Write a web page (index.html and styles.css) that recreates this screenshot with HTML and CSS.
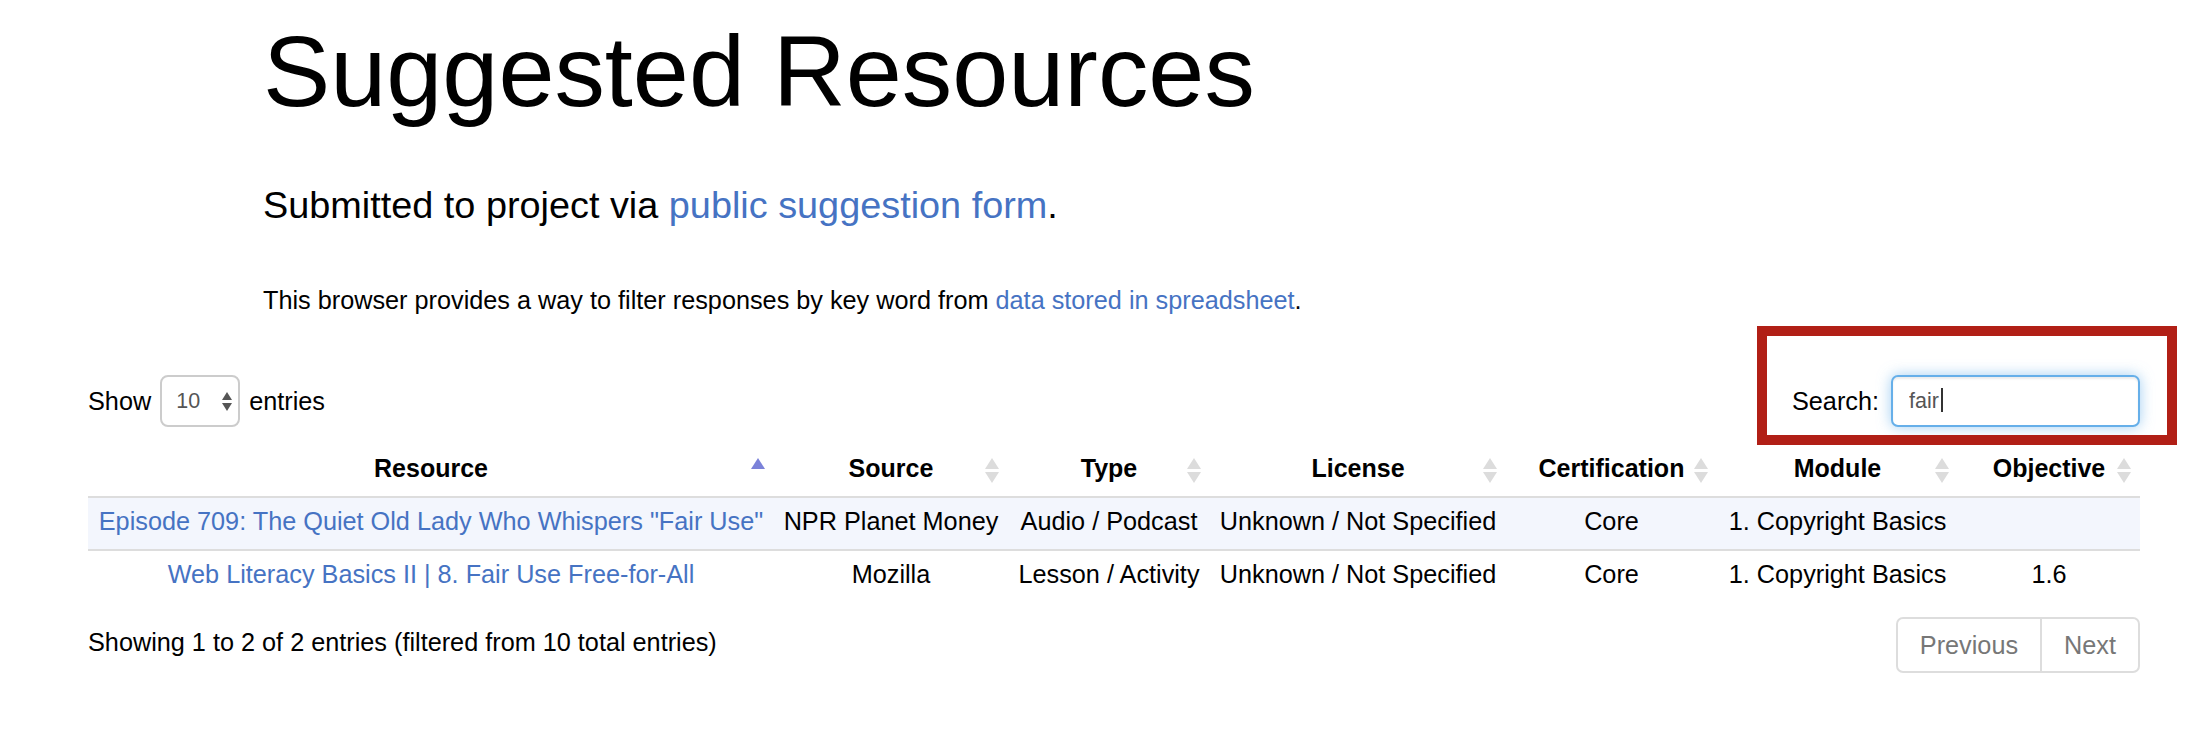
FILE: index.html
```html
<!DOCTYPE html>
<html lang="en">
<head>
    <meta charset="UTF-8">
    <meta name="viewport" content="width=device-width, initial-scale=1.0">
    <title>Suggested Resources</title>
    <link rel="stylesheet" href="styles.css">
</head>
<body>

<div class="intro">
    <h1>Suggested Resources</h1>
    <p class="lead">Submitted to project via <a href="#">public suggestion form</a>.</p>
    <p class="intro-text">This browser provides a way to filter responses by key word from <a href="#">data stored in spreadsheet</a>.</p>
</div>

<div class="dataTables_wrapper">
    <div class="toolbar">
        <div class="dataTables_length">
            <label>
                <span>Show</span>
                <span class="select-wrap">
                    <select name="resources_length">
                        <option value="10">10</option>
                        <option value="25">25</option>
                        <option value="50">50</option>
                        <option value="100">100</option>
                    </select>
                </span>
                <span>entries</span>
            </label>
        </div>
        <div class="dataTables_filter">
            <label>
                <span>Search:</span>
                <span class="search-field">
                    <input type="search" value="fair">
                    <span class="text-cursor"></span>
                </span>
            </label>
            <div class="highlight"></div>
        </div>
    </div>

    <table class="resources">
        <colgroup>
            <col class="col-resource">
            <col class="col-source">
            <col class="col-type">
            <col class="col-license">
            <col class="col-cert">
            <col class="col-module">
            <col class="col-objective">
        </colgroup>
        <thead>
            <tr>
                <th class="sorting_asc">Resource</th>
                <th class="sorting">Source</th>
                <th class="sorting">Type</th>
                <th class="sorting">License</th>
                <th class="sorting">Certification</th>
                <th class="sorting">Module</th>
                <th class="sorting">Objective</th>
            </tr>
        </thead>
        <tbody>
            <tr class="odd">
                <td><a href="#">Episode 709: The Quiet Old Lady Who Whispers "Fair Use"</a></td>
                <td>NPR Planet Money</td>
                <td>Audio / Podcast</td>
                <td>Unknown / Not Specified</td>
                <td>Core</td>
                <td>1. Copyright Basics</td>
                <td></td>
            </tr>
            <tr class="even">
                <td><a href="#">Web Literacy Basics II | 8. Fair Use Free-for-All</a></td>
                <td>Mozilla</td>
                <td>Lesson / Activity</td>
                <td>Unknown / Not Specified</td>
                <td>Core</td>
                <td>1. Copyright Basics</td>
                <td>1.6</td>
            </tr>
        </tbody>
    </table>

    <div class="table-footer">
        <div class="dataTables_info">Showing 1 to 2 of 2 entries (filtered from 10 total entries)</div>
        <ul class="pagination">
            <li class="disabled"><a href="#">Previous</a></li>
            <li class="disabled"><a href="#">Next</a></li>
        </ul>
    </div>
</div>

</body>
</html>
```

FILE: styles.css
```css
body {
    margin: 0;
    font-family: "Liberation Sans", Arial, sans-serif;
    font-size: 25.25px;
    line-height: 36px;
    color: #000;
    background: #fff;
}
a {
    color: #4673c3;
    text-decoration: none;
}

/* intro */
.intro {
    padding: 16px 0 0 263px;
}
h1 {
    margin: 0;
    font-size: 100.8px;
    font-weight: normal;
    line-height: 110px;
}
.lead {
    margin: 53px 0 0;
    font-size: 37.85px;
    line-height: 52px;
}
.intro-text {
    margin: 51px 0 0;
}

/* datatable */
.dataTables_wrapper {
    margin: 57px 72px 0 88px;
}
.toolbar {
    display: flex;
    justify-content: space-between;
    align-items: center;
    height: 52px;
}
.dataTables_length label,
.dataTables_filter label {
    display: flex;
    align-items: center;
}
.dataTables_length label {
    gap: 9px;
}
.dataTables_filter label {
    gap: 12px;
}
.select-wrap {
    position: relative;
    display: block;
}
.select-wrap select {
    -webkit-appearance: none;
    appearance: none;
    display: block;
    width: 80px;
    height: 52px;
    box-sizing: border-box;
    padding: 0 0 0 14px;
    border: 2px solid #ccc;
    border-radius: 8px;
    background: #fff;
    font-family: "Liberation Sans", Arial, sans-serif;
    font-size: 21.5px;
    color: #555;
}
.select-wrap::before,
.select-wrap::after {
    content: "";
    position: absolute;
    left: 62px;
    border-left: 5px solid transparent;
    border-right: 5px solid transparent;
}
.select-wrap::before {
    top: 17px;
    border-bottom: 8px solid #555;
}
.select-wrap::after {
    top: 28px;
    border-top: 8px solid #555;
}

.dataTables_filter {
    position: relative;
}
.search-field {
    position: relative;
    display: block;
}
.search-field input {
    display: block;
    width: 249px;
    height: 52px;
    box-sizing: border-box;
    padding: 0 16px;
    border: 2px solid #66afe9;
    border-radius: 7px;
    outline: none;
    font-family: "Liberation Sans", Arial, sans-serif;
    font-size: 21.5px;
    color: #555;
    box-shadow: inset 0 2px 2px rgba(0, 0, 0, 0.075), 0 0 14px rgba(102, 175, 233, 0.6);
}
.text-cursor {
    position: absolute;
    left: 50px;
    top: 13px;
    width: 2px;
    height: 24px;
    background: #333;
}
.highlight {
    position: absolute;
    left: -35px;
    right: -37px;
    top: -49px;
    bottom: -18px;
    border: 10px solid #b11f16;
    pointer-events: none;
}

.resources {
    width: 100%;
    margin-top: 13px;
    table-layout: fixed;
    border-collapse: separate;
    border-spacing: 0;
}
.col-resource { width: 686px; }
.col-source { width: 234px; }
.col-type { width: 202px; }
.col-license { width: 296px; }
.col-cert { width: 211px; }
.col-module { width: 241px; }
.col-objective { width: 182px; }

.resources th {
    position: relative;
    padding: 10px 11px;
    border-bottom: 2px solid #ddd;
    font-size: 25px;
    font-weight: bold;
    text-align: center;
    white-space: nowrap;
}
.resources td {
    padding: 5px 8px 10px;
    text-align: center;
    white-space: nowrap;
}
.resources tbody tr + tr td {
    border-top: 2px solid #ddd;
}
.resources tr.odd td {
    background: #f3f6fd;
}

.sorting::before,
.sorting::after,
.sorting_asc::before {
    content: "";
    position: absolute;
    right: 9px;
    border-left: 7px solid transparent;
    border-right: 7px solid transparent;
}
.sorting::before {
    top: 18px;
    border-bottom: 11px solid #dcdcdc;
}
.sorting::after {
    top: 32px;
    border-top: 11px solid #dcdcdc;
}
.sorting_asc::before {
    top: 18px;
    border-bottom: 11px solid #7b82d9;
}

.table-footer {
    display: flex;
    justify-content: space-between;
    align-items: flex-start;
    margin-top: 15px;
}
.dataTables_info {
    padding-top: 7px;
}
.pagination {
    display: flex;
    margin: 0;
    padding: 0;
    list-style: none;
}
.pagination a {
    display: block;
    padding: 8px 22px;
    border: 2px solid #ddd;
    color: #777;
    background: #fff;
}
.pagination li + li a {
    border-left: 0;
}
.pagination li:first-child a {
    border-radius: 7px 0 0 7px;
}
.pagination li:last-child a {
    border-radius: 0 7px 7px 0;
}
```
